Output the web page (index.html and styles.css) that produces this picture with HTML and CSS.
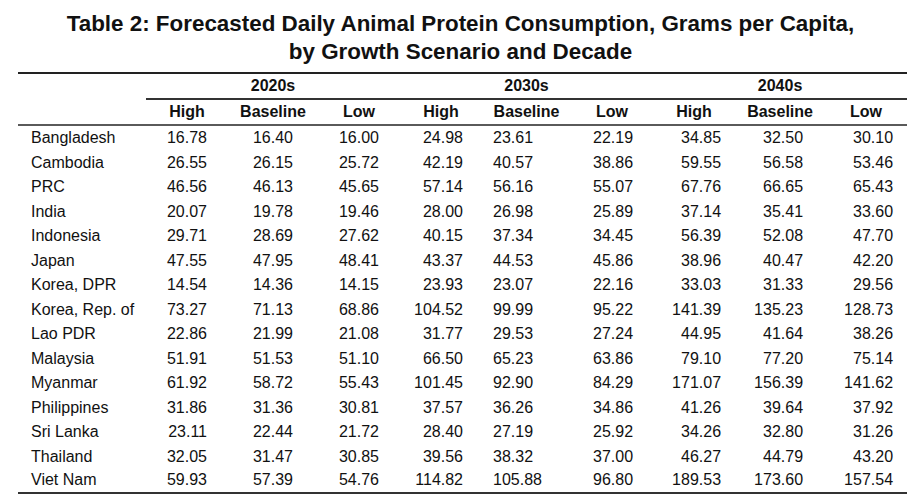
FILE: index.html
```html
<!DOCTYPE html>
<html lang="en">
<head>
<meta charset="utf-8">
<title>Table 2</title>
<link rel="stylesheet" href="styles.css">
</head>
<body>
<div class="page">
  <h1 class="title">Table 2: Forecasted Daily Animal Protein Consumption, Grams per Capita,<br>by Growth Scenario and Decade</h1>
  <table class="data">
    <colgroup>
      <col class="c-label">
      <col class="c-n"><col class="c-w"><col class="c-n">
      <col class="c-n"><col class="c-w2"><col class="c-n">
      <col class="c-n"><col class="c-w"><col class="c-n">
    </colgroup>
    <thead>
      <tr class="decades">
        <th></th>
        <th colspan="3" class="dec">2020s</th>
        <th colspan="3" class="dec">2030s</th>
        <th colspan="3" class="dec">2040s</th>
      </tr>
      <tr class="scen">
        <th></th>
        <th>High</th><th>Baseline</th><th>Low</th>
        <th>High</th><th>Baseline</th><th>Low</th>
        <th>High</th><th>Baseline</th><th>Low</th>
      </tr>
    </thead>
    <tbody>
      <tr><td>Bangladesh</td><td>16.78</td><td>16.40</td><td>16.00</td><td>24.98</td><td>23.61</td><td>22.19</td><td>34.85</td><td>32.50</td><td>30.10</td></tr>
      <tr><td>Cambodia</td><td>26.55</td><td>26.15</td><td>25.72</td><td>42.19</td><td>40.57</td><td>38.86</td><td>59.55</td><td>56.58</td><td>53.46</td></tr>
      <tr><td>PRC</td><td>46.56</td><td>46.13</td><td>45.65</td><td>57.14</td><td>56.16</td><td>55.07</td><td>67.76</td><td>66.65</td><td>65.43</td></tr>
      <tr><td>India</td><td>20.07</td><td>19.78</td><td>19.46</td><td>28.00</td><td>26.98</td><td>25.89</td><td>37.14</td><td>35.41</td><td>33.60</td></tr>
      <tr><td>Indonesia</td><td>29.71</td><td>28.69</td><td>27.62</td><td>40.15</td><td>37.34</td><td>34.45</td><td>56.39</td><td>52.08</td><td>47.70</td></tr>
      <tr><td>Japan</td><td>47.55</td><td>47.95</td><td>48.41</td><td>43.37</td><td>44.53</td><td>45.86</td><td>38.96</td><td>40.47</td><td>42.20</td></tr>
      <tr><td>Korea, DPR</td><td>14.54</td><td>14.36</td><td>14.15</td><td>23.93</td><td>23.07</td><td>22.16</td><td>33.03</td><td>31.33</td><td>29.56</td></tr>
      <tr><td>Korea, Rep. of</td><td>73.27</td><td>71.13</td><td>68.86</td><td>104.52</td><td>99.99</td><td>95.22</td><td>141.39</td><td>135.23</td><td>128.73</td></tr>
      <tr><td>Lao PDR</td><td>22.86</td><td>21.99</td><td>21.08</td><td>31.77</td><td>29.53</td><td>27.24</td><td>44.95</td><td>41.64</td><td>38.26</td></tr>
      <tr><td>Malaysia</td><td>51.91</td><td>51.53</td><td>51.10</td><td>66.50</td><td>65.23</td><td>63.86</td><td>79.10</td><td>77.20</td><td>75.14</td></tr>
      <tr><td>Myanmar</td><td>61.92</td><td>58.72</td><td>55.43</td><td>101.45</td><td>92.90</td><td>84.29</td><td>171.07</td><td>156.39</td><td>141.62</td></tr>
      <tr><td>Philippines</td><td>31.86</td><td>31.36</td><td>30.81</td><td>37.57</td><td>36.26</td><td>34.86</td><td>41.26</td><td>39.64</td><td>37.92</td></tr>
      <tr><td>Sri Lanka</td><td>23.11</td><td>22.44</td><td>21.72</td><td>28.40</td><td>27.19</td><td>25.92</td><td>34.26</td><td>32.80</td><td>31.26</td></tr>
      <tr><td>Thailand</td><td>32.05</td><td>31.47</td><td>30.85</td><td>39.56</td><td>38.32</td><td>37.00</td><td>46.27</td><td>44.79</td><td>43.20</td></tr>
      <tr><td>Viet Nam</td><td>59.93</td><td>57.39</td><td>54.76</td><td>114.82</td><td>105.88</td><td>96.80</td><td>189.53</td><td>173.60</td><td>157.54</td></tr>
    </tbody>
  </table>
</div>
</body>
</html>
```

FILE: styles.css
```css
html, body {
  margin: 0;
  padding: 0;
  background: #ffffff;
}

body {
  font-family: "Liberation Sans", Arial, sans-serif;
  color: #111111;
}

.page {
  padding: 10px 14px 0 18px;
}

.title {
  margin: 0 -14px 0 -18px;
  font-size: 22.4px;
  line-height: 28px;
  font-weight: bold;
  text-align: center;
  color: #111111;
}

.data {
  margin-top: 6px;
  border-collapse: separate;
  border-spacing: 0;
  table-layout: fixed;
  width: 889px;
  font-size: 16px;
}

.c-label { width: 128px; }
.c-n { width: 82px; }
.c-w { width: 90px; }
.c-w2 { width: 89px; }

.data th,
.data td {
  padding: 0;
  white-space: nowrap;
}

.data th {
  font-weight: bold;
  text-align: center;
}

.decades th {
  height: 24px;
  border-top: 2px solid #222222;
}

.decades th.dec {
  border-bottom: 2px solid #333333;
}

.decades th:first-child {
  border-bottom: 2px solid transparent;
}

.scen th {
  height: 24px;
  border-bottom: 2px solid #5a5a5a;
}

.data tbody tr {
  height: 24.5px;
}

.data tbody td {
  text-align: right;
  line-height: 18px;
}

.data tbody tr:last-child td {
  border-bottom: 2px solid #333333;
}

.data tbody td:nth-child(1) { text-align: left; padding-left: 13px; }
.data tbody td:nth-child(2) { padding-right: 21px; }
.data tbody td:nth-child(3) { padding-right: 25px; }
.data tbody td:nth-child(4) { padding-right: 21px; }
.data tbody td:nth-child(5) { padding-right: 19px; }
.data tbody td:nth-child(6) { text-align: left; padding-left: 11px; }
.data tbody td:nth-child(7) { padding-right: 20px; }
.data tbody td:nth-child(8) { padding-right: 14px; }
.data tbody td:nth-child(9) { padding-right: 22px; }
.data tbody td:nth-child(10) { padding-right: 14px; }
```
